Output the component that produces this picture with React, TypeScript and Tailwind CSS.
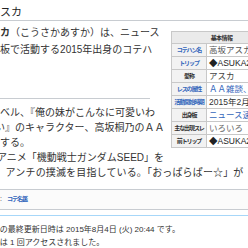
const FONT = { fontFamily: '"Liberation Sans", "Noto Sans CJK JP", sans-serif' };

type Row = { label: string; labelLink: boolean; value: string; valueCls: string };

const rows: Row[] = [
  { label: "コテハン名", labelLink: true, value: "高坂アスカ", valueCls: "text-[#555]" },
  { label: "トリップ", labelLink: true, value: "◆ASUKA2zA.", valueCls: "text-[#222]" },
  { label: "愛称", labelLink: false, value: "アスカ", valueCls: "text-[#444]" },
  { label: "レスの属性", labelLink: true, value: "ＡＡ雑談、ネタ", valueCls: "text-[#3366bb]" },
  { label: "活動開始時期", labelLink: true, value: "2015年2月", valueCls: "text-[#333]" },
  { label: "出身板", labelLink: false, value: "ニュース速報VIP", valueCls: "text-[#3366bb]" },
  { label: "主な出現スレ", labelLink: false, value: "いろいろ", valueCls: "text-[#666]" },
  { label: "前トリップ", labelLink: false, value: "◆ASUKA2zA.", valueCls: "text-[#222]" },
];

export default function App() {
  return (
    <div className="w-[248px] h-[248px] overflow-hidden bg-white text-[#333]" style={FONT}>
      <div className="ml-[-40px] w-[340px]">
        {/* page title */}
        <div className="h-[21px] border-b border-[#c8ccd1] pl-[7px] pt-[5px] text-[11px] leading-[14px] whitespace-nowrap text-[#222]">
          高坂アスカ
        </div>

        <div className="flex items-start">
          <div className="w-[208px] text-[10px] pt-[3px]">
            <div className="leading-[17px] whitespace-nowrap">
              <div className="h-[17px]">
                <b>高坂アスカ</b>（こうさかあすか）は、ニュース
              </div>
              <div className="h-[17px] pl-[4px]">速報VIP板で活動する2015年出身のコテハ</div>
              <div className="h-[17px]">ン。</div>
            </div>
            <div className="h-[24px] w-[190px] border-b border-[#c8ccd1] text-[13px] leading-[22px]">概要</div>
            <div className="pt-[6px] leading-[15px] whitespace-nowrap">
              <div className="h-[15px]">プロ並レベル、『俺の妹がこんなに可愛いわ</div>
              <div className="h-[15px] pl-[5px]">けがない』のキャラクター、高坂桐乃のＡＡ</div>
              <div className="h-[15px] pl-[10px]">を愛用する。</div>
            </div>
          </div>

          <table className="mt-[10px] ml-[3px] w-[100px] border-collapse border border-[#c8c8c8] table-fixed">
            <colgroup>
              <col className="w-[35px]" />
              <col className="w-[65px]" />
            </colgroup>
            <tbody>
              <tr className="h-[12px]">
                <th
                  colSpan={2}
                  className="bg-[#eaeaea] border border-[#c8c8c8] p-0 text-[6px] leading-[10px] font-bold text-[#333] tracking-[-0.6px] text-center"
                >
                  基本情報
                </th>
              </tr>
              {rows.map((r) => (
                <tr key={r.label} className="h-[13px]">
                  <th
                    className={
                      "bg-[#f2f2f2] border border-[#c8c8c8] p-0 text-[6px] leading-[11px] font-bold whitespace-nowrap tracking-[-1.1px] text-center " +
                      (r.labelLink ? "text-[#3366bb]" : "text-[#333]")
                    }
                  >
                    {r.label}
                  </th>
                  <td
                    className={
                      "border border-[#c8c8c8] py-0 pl-[2px] pr-0 text-[8.5px] leading-[11px] whitespace-nowrap overflow-hidden " +
                      r.valueCls
                    }
                  >
                    {r.value}
                  </td>
                </tr>
              ))}
            </tbody>
          </table>
        </div>

        <div className="text-[10px] leading-[15px] whitespace-nowrap">
          <div className="h-[15px] pl-[7px]">好きなアニメ「機動戦士ガンダムSEED」を</div>
          <div className="h-[15px] pl-[5px] tracking-[0.15px]">嫌う者、アンチの撲滅を目指している。「おっぱらぱー☆」が</div>
        </div>

        {/* category box */}
        <div className="mt-[9px] h-[21px] border border-[#c8ccd1] bg-[#fbfbfb] flex items-center pl-[5px] whitespace-nowrap">
          <span className="inline-block w-[34px] text-[6px] tracking-[-1px] font-bold text-[#3366bb]">カテゴリ</span>
          <span className="text-[7px] text-[#333]">:</span>
          <span className="ml-[5px] text-[6px] tracking-[-1px] font-bold text-[#3366bb]">コテ名鑑</span>
        </div>

        {/* footer */}
        <div className="mt-[5px] border-t border-[#a7d7f9] pt-[7px] text-[8px] text-[#333] leading-[13px] whitespace-nowrap">
          <div className="h-[13px]">このページの最終更新日時は 2015年8月4日 (火) 20:44 です。</div>
          <div className="h-[13px]">このページは 1 回アクセスされました。</div>
        </div>
      </div>
    </div>
  );
}
